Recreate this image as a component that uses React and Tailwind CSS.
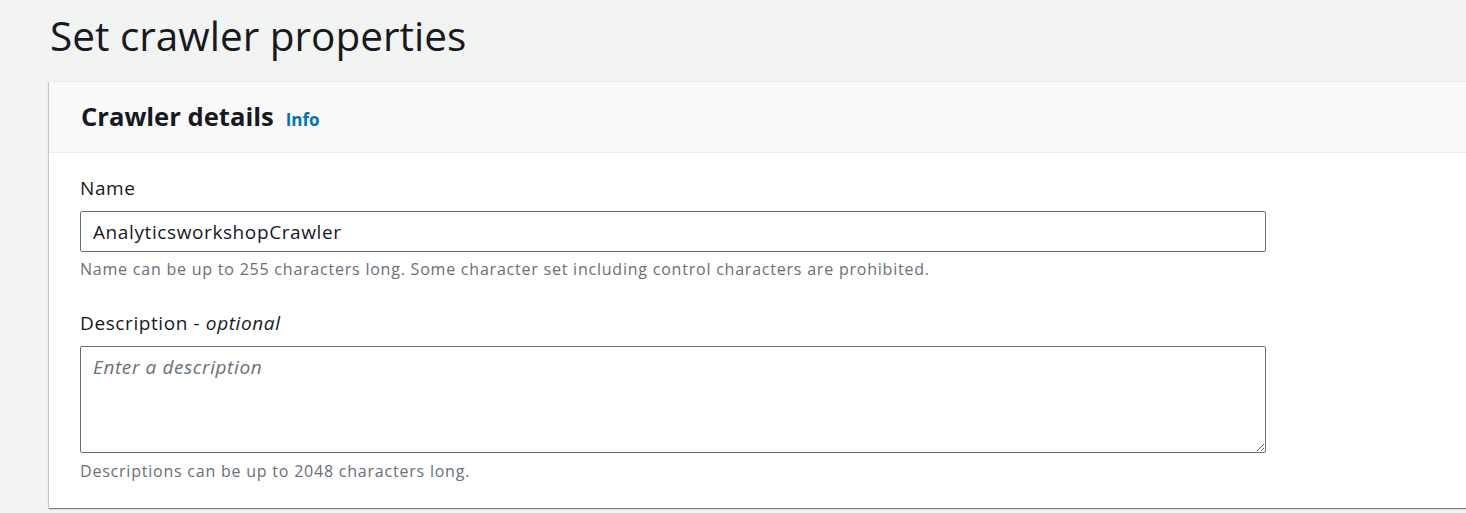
export default function App() {
  return (
    <div className="h-[513px] w-[1466px] overflow-hidden bg-[#f2f3f3] text-[#16191f] font-['Open_Sans','Noto_Sans',Arial,sans-serif]">
      <h1 className="pl-[50px] pt-[8px] h-[81px] text-[40.5px] leading-[56px] font-normal text-[#16191f]">
        Set crawler properties
      </h1>
      <section className="ml-[49px] w-[1440px] bg-white shadow-[0_1px_1px_0_rgba(0,28,36,0.3),1px_1px_1px_0_rgba(0,28,36,0.15),-1px_1px_1px_0_rgba(0,28,36,0.15)] border-t border-[#eaeded]">
        <div className="h-[71px] bg-[#fafafa] border-b border-[#eaeded] flex items-center pl-[32px]">
          <h2 className="text-[25.6px] font-bold leading-none text-[#16191f]">Crawler details</h2>
          <a className="ml-[12px] mt-[5px] text-[17px] font-bold text-[#0073bb] leading-none">Info</a>
        </div>
        <div className="flex flex-col pl-[31px] pt-[22px] pb-[26px]">
          <label className="block text-[19px] leading-[26px] tracking-[0.6px] text-[#16191f]">Name</label>
          <input
            readOnly
            value="AnalyticsworkshopCrawler"
            className="mt-[10px] block w-[1186px] h-[41px] border border-[#687078] rounded-[2px] px-[12px] text-[19px] tracking-[0.6px] text-[#16191f] outline-none font-['Open_Sans','Noto_Sans',Arial,sans-serif]"
          />
          <p className="mt-[6px] text-[16px] leading-[22px] tracking-[0.78px] text-[#687078]">
            Name can be up to 255 characters long. Some character set including control characters are prohibited.
          </p>
          <label className="block mt-[30px] text-[19px] leading-[26px] tracking-[0.6px] text-[#16191f]">
            Description - <i>optional</i>
          </label>
          <textarea
            placeholder="Enter a description"
            className="mt-[10px] block w-[1186px] h-[107px] border border-[#687078] rounded-[2px] px-[12px] py-[6px] text-[19px] tracking-[0.6px] italic placeholder:text-[#687078] outline-none resize-y font-['Open_Sans','Noto_Sans',Arial,sans-serif]"
          />
          <p className="mt-[7px] text-[16px] leading-[22px] tracking-[0.78px] text-[#687078]">
            Descriptions can be up to 2048 characters long.
          </p>
        </div>
      </section>
    </div>
  );
}
